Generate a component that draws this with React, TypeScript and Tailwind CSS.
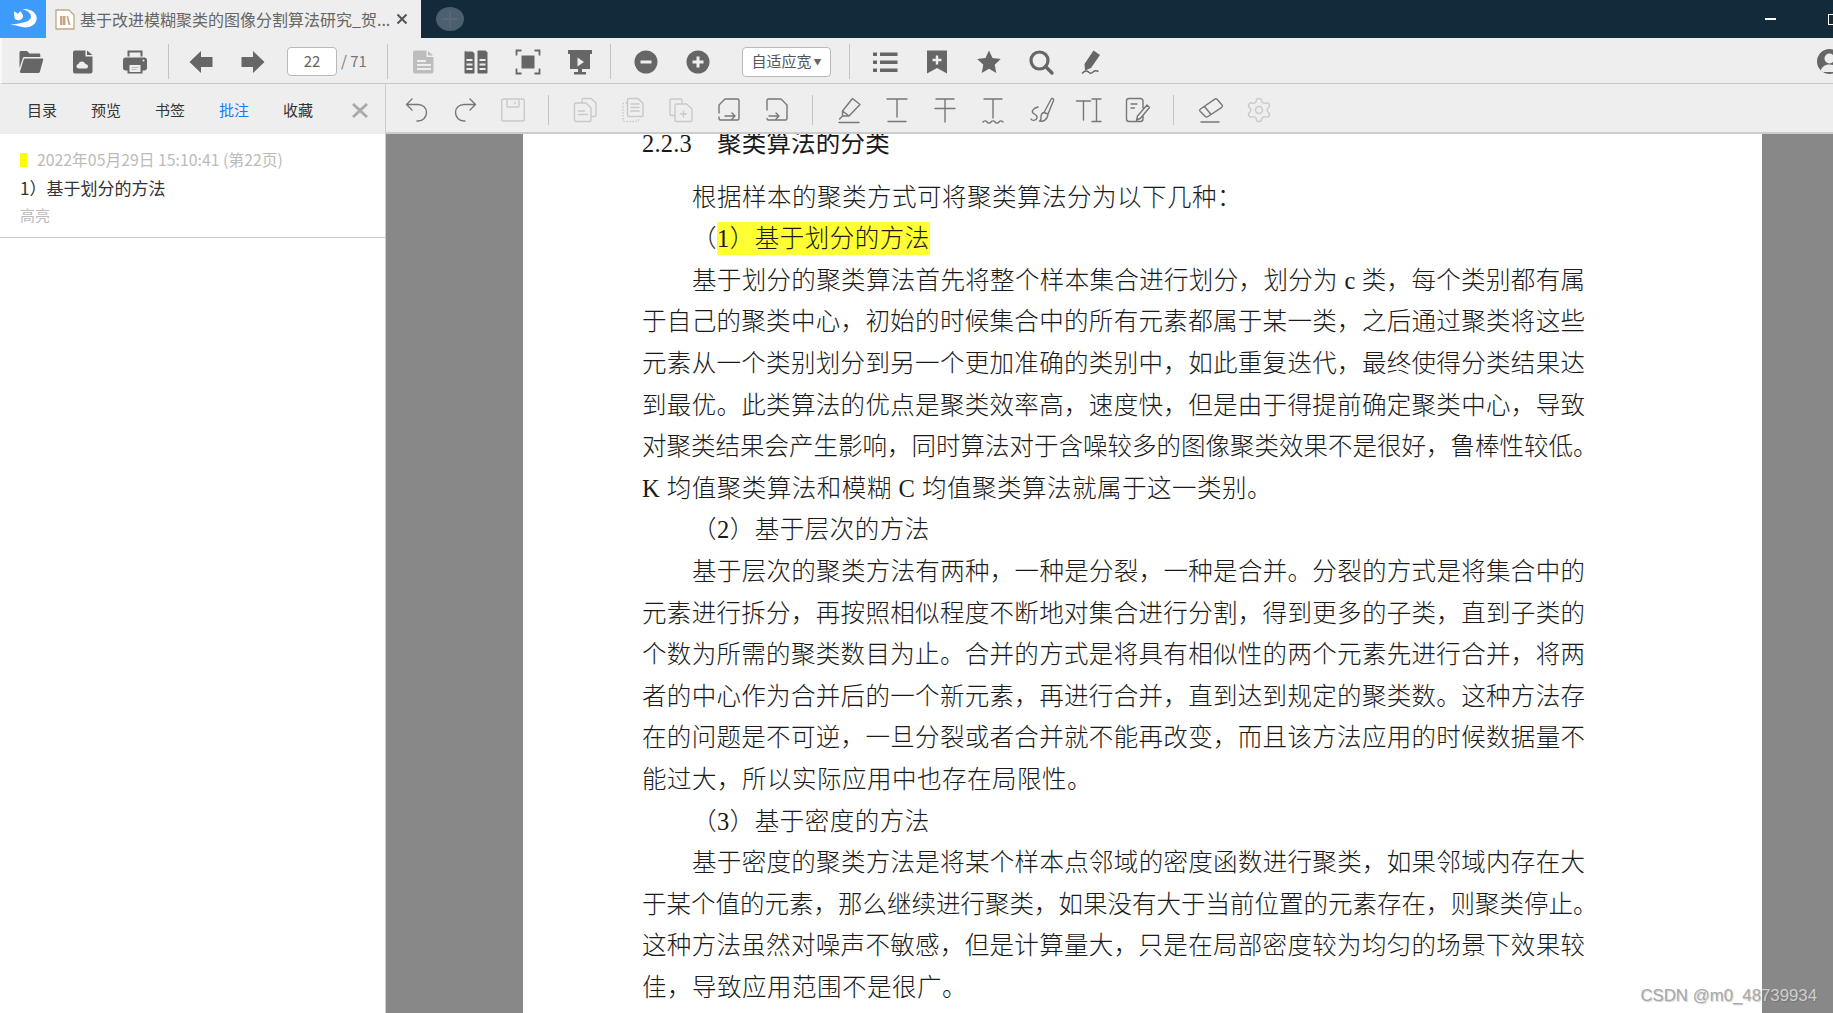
import type { ReactNode } from "react"
import { Settings } from "lucide-react"

const UI_FONT = "[font-family:'Noto_Sans_CJK_SC',sans-serif]"

// page text, one entry per printed line
const lines: { text: string; indent?: boolean; justify?: boolean }[] = [
  { text: "根据样本的聚类方式可将聚类算法分为以下几种：", indent: true },
  { text: "HIGHLIGHT", indent: true },
  { text: "基于划分的聚类算法首先将整个样本集合进行划分，划分为 c 类，每个类别都有属", indent: true, justify: true },
  { text: "于自己的聚类中心，初始的时候集合中的所有元素都属于某一类，之后通过聚类将这些", justify: true },
  { text: "元素从一个类别划分到另一个更加准确的类别中，如此重复迭代，最终使得分类结果达", justify: true },
  { text: "到最优。此类算法的优点是聚类效率高，速度快，但是由于得提前确定聚类中心，导致", justify: true },
  { text: "对聚类结果会产生影响，同时算法对于含噪较多的图像聚类效果不是很好，鲁棒性较低。", justify: true },
  { text: "K 均值聚类算法和模糊 C 均值聚类算法就属于这一类别。" },
  { text: "（2）基于层次的方法", indent: true },
  { text: "基于层次的聚类方法有两种，一种是分裂，一种是合并。分裂的方式是将集合中的", indent: true, justify: true },
  { text: "元素进行拆分，再按照相似程度不断地对集合进行分割，得到更多的子类，直到子类的", justify: true },
  { text: "个数为所需的聚类数目为止。合并的方式是将具有相似性的两个元素先进行合并，将两", justify: true },
  { text: "者的中心作为合并后的一个新元素，再进行合并，直到达到规定的聚类数。这种方法存", justify: true },
  { text: "在的问题是不可逆，一旦分裂或者合并就不能再改变，而且该方法应用的时候数据量不", justify: true },
  { text: "能过大，所以实际应用中也存在局限性。" },
  { text: "（3）基于密度的方法", indent: true },
  { text: "基于密度的聚类方法是将某个样本点邻域的密度函数进行聚类，如果邻域内存在大", indent: true, justify: true },
  { text: "于某个值的元素，那么继续进行聚类，如果没有大于当前位置的元素存在，则聚类停止。", justify: true },
  { text: "这种方法虽然对噪声不敏感，但是计算量大，只是在局部密度较为均匀的场景下效果较", justify: true },
  { text: "佳，导致应用范围不是很广。" },
]

function Ico({ w = 52, children }: { w?: number; children: ReactNode }) {
  return (
    <div className="flex shrink-0 items-center justify-center" style={{ width: w }}>
      <svg width="28" height="28" viewBox="0 0 28 28">
        {children}
      </svg>
    </div>
  )
}

function Sep({ className }: { className: string }) {
  return <div className={`w-px shrink-0 bg-[#c4c4c4] ${className}`} />
}

function Line2({ d, c = "#777" }: { d: string; c?: string }) {
  return <path d={d} fill="none" stroke={c} strokeWidth="1.4" strokeLinecap="round" strokeLinejoin="round" />
}

const DIS = "#c9c9c9"

function TopToolbar() {
  const f = "#666"
  return (
    <div className="flex h-[46px] items-center overflow-hidden border-b border-[#c8c8c8] border-l-2 border-l-[#f8f8f8] bg-[#eeeeee] pl-[3px] pt-[2px]">
      <Ico>
        <path fill={f} d="M2.500 4.500c0-.8.6-1.500 1.500-1.500h6l2.500 2.500H22c.8 0 1.300.6 1.300 1.300V9H7.500c-.9 0-1.400.4-1.700 1.200L2.500 20Z" />
        <path fill={f} d="M8 10.500h17.200c.7 0 1.200.6 1 1.300L22.800 24c-.2.6-.7 1-1.300 1H4c-.8 0-1.300-.7-1-1.400L6.700 11.400c.2-.6.7-.9 1.300-.9Z" />
      </Ico>
      <Ico>
        <path fill={f} d="M6 2.500h10.500v6h7V23.500c0 1.200-.9 2-2 2H6c-1.100 0-2-.8-2-2v-19c0-1.100.9-2 2-2Z" />
        <path fill={f} d="M18 2.500 23.500 7h-5.500Z" />
        <path fill="#eee" d="M10 20.500c-1.500 0-2.500-1-2.500-2.300 0-1.200.9-2.100 2-2.300.4-1.500 1.700-2.500 3.300-2.500 1.700 0 3.100 1.100 3.500 2.700 1.500 0 2.700 1 2.700 2.300 0 1.200-1 2.100-2.300 2.100Z" />
      </Ico>
      <Ico>
        <path fill={f} d="M6.500 2.500h15v6h-2V4.500h-11v4h-2Z" />
        <path fill={f} d="M4.500 9.500h19c1.400 0 2.500 1.100 2.500 2.500v8c0 1.400-1.100 2.500-2.500 2.500H21.500v3h-15v-3H4.500C3.100 22.500 2 21.400 2 20v-8c0-1.400 1.100-2.500 2.500-2.500Z" />
        <path fill="#eee" d="M8.500 17h11v7h-11Z" />
        <path fill="#bbb" d="M10.500 19h7v1h-7Zm0 2h5v1h-5Z" />
        <circle cx="22.500" cy="12.500" r="1" fill="#eee" />
      </Ico>
      <Sep className="ml-[7px] h-[35px]" />
      <div className="w-[6px] shrink-0" />
      <Ico>
        <path fill={f} d="M2.500 14 14 3v6h11.500v10H14v6Z" />
      </Ico>
      <Ico>
        <path fill={f} d="M25.500 14 14 3v6H2.500v10H14v6Z" />
      </Ico>
      <div className={`ml-[8px] flex h-[29px] w-[50px] shrink-0 items-center justify-center rounded-[4px] border border-[#b9b9b9] bg-white text-[15px] text-[#666] ${UI_FONT}`}>
        22
      </div>
      <span className={`ml-[4px] w-[42px] shrink-0 text-[15px] text-[#777] ${UI_FONT}`}>/ 71</span>
      <Sep className="ml-[4px] h-[35px]" />
      <div className="w-[10px] shrink-0" />
      <Ico>
        <path fill="#bdbdbd" d="M5 2.500h11.500v6.500h7v14.500c0 1.100-.9 2-2 2H5c-1.100 0-2-.9-2-2v-19c0-1.100.9-2 2-2Z" />
        <path fill="#bdbdbd" d="M18 3l5 4.500h-5Z" />
        <path fill="#eee" d="M7 12h9v2H7Zm0 4h14v2H7Zm0 4h14v2H7Z" />
      </Ico>
      <Ico>
        <path fill={f} d="M3.500 3.500h7l2 2v19c0 .6-.4 1-1 1h-8c-.6 0-1-.4-1-1v-20c0-1 .4-2 1-2Z" />
        <path fill={f} d="M16.500 2.500h7l2 2v20c0 .6-.4 1-1 1h-8c-.6 0-1-.4-1-1v-21c0-.6.4-1 1-1Z" />
        <path fill="#eee" d="M4.500 11h6v2h-6Zm0 4.500h6v2h-6Zm0 4.500h6v2h-6Zm13-9h6v2h-6Zm0 4.500h6v2h-6Zm0 4.500h6v2h-6Z" />
      </Ico>
      <Ico>
        <path fill={f} d="M7.500 7.500h13v13h-13Z" />
        <path fill="none" stroke={f} strokeWidth="1.800" d="M2.500 7.500V2.500h5M20.500 2.500h5v5M25.500 20.500v5h-5M7.500 25.500h-5v-5" />
      </Ico>
      <Ico>
        <path fill={f} d="M2 2h24v4h-2v15H16v3h4v2.500H8V24h4v-3H4V6H2Z" />
        <path fill="#eee" d="M11.500 9.500 18 14l-6.500 4.500Z" />
      </Ico>
      <Sep className="ml-[4px] h-[35px]" />
      <div className="w-[9px] shrink-0" />
      <Ico>
        <circle cx="14" cy="14" r="11.500" fill={f} />
        <path fill="#eee" d="M8.500 12.500h11v3h-11Z" />
      </Ico>
      <Ico>
        <circle cx="14" cy="14" r="11.500" fill={f} />
        <path fill="#eee" d="M8.500 12.500h4v-4h3v4h4v3h-4v4h-3v-4h-4Z" />
      </Ico>
      <div className={`ml-[18px] flex h-[30px] w-[89px] shrink-0 items-center justify-center rounded-[4px] border border-[#b9b9b9] bg-white text-[15px] text-[#555] ${UI_FONT}`}>
        自适应宽<span className="ml-[2px] text-[8px] text-[#666]">▼</span>
      </div>
      <Sep className="ml-[18px] h-[35px]" />
      <div className="w-[9px] shrink-0" />
      <Ico>
        <path fill={f} d="M2 4.500h4v3.500H2Zm0 8h4V16H2Zm0 8h4V24H2ZM9 4.500h17.500v3.500H9Zm0 8h17.500V16H9Zm0 8h17.500V24H9Z" />
      </Ico>
      <Ico>
        <path fill={f} d="M4 2.500h20v23l-10-5.500-10 5.500Z" />
        <path fill="#eee" d="M12.800 7.500h2.400v3.300h3.300v2.400h-3.300v3.300h-2.400v-3.300H9.500v-2.400h3.300Z" />
      </Ico>
      <Ico>
        <path fill={f} d="m14 2.500 3.500 7.600 8.300 1-6.100 5.600 1.600 8.200L14 20.800 6.700 24.900l1.600-8.200L2.200 11.100l8.300-1Z" />
      </Ico>
      <Ico>
        <circle cx="12.500" cy="12.500" r="8.500" fill="none" stroke={f} strokeWidth="3.200" />
        <path d="m18.500 18.500 6.500 6.500" stroke={f} strokeWidth="3.400" strokeLinecap="round" />
      </Ico>
      <Ico>
        <path fill={f} d="m14.500 2.500 6.500 4.500-9 13-6 2.500-.5-6.500Z" />
        <path fill="none" stroke={f} strokeWidth="1.500" d="M3 25.500c3-3 5-3 6.500-1.500s3 1.500 4.500 0 3.500-1.500 5.500-.5" />
      </Ico>
      <div className="ml-auto mr-[-9px] flex h-[25px] w-[25px] shrink-0 items-center justify-center overflow-hidden rounded-full bg-[#666]">
        <svg width="25" height="25" viewBox="0 0 25 25">
          <circle cx="12.500" cy="9.500" r="5" fill="#eee" />
          <path fill="#eee" d="M3.500 23c.6-5 4.300-7.500 9-7.500s8.400 2.500 9 7.500Z" />
        </svg>
      </div>
    </div>
  )
}

function AnnotToolbar() {
  return (
    <div className="flex h-[50px] flex-1 items-center border-b-2 border-[#cccccc] bg-[#eeeeee] pl-[7px] pt-[4px]">
      <Ico w={48}>
        <Line2 d="M9 3 3.500 8.500 9 14M4 8.500h11c5 0 8.500 3.500 8.500 8s-3.500 8.500-8.500 8.500h-1" />
      </Ico>
      <Ico w={48}>
        <Line2 d="M19 3l5.500 5.500L19 14M24 8.500H13c-5 0-8.500 3.500-8.500 8s3.500 8.500 8.500 8.500h1" />
      </Ico>
      <Ico w={48}>
        <Line2 c={DIS} d="M4.500 3h19c1 0 1.800.8 1.800 1.800v18.400c0 1-.8 1.800-1.800 1.800h-19c-1 0-1.800-.8-1.800-1.800V4.800c0-1 .8-1.800 1.800-1.800ZM8 3v7c0 .6.400 1 1 1h10c.6 0 1-.4 1-1V3M16 6v1.500" />
      </Ico>
      <Sep className="ml-[11px] h-[30px]" />
      <div className="w-[12px] shrink-0" />
      <Ico w={48}>
        <Line2 c={DIS} d="M11 7V4c0-1 .8-1.500 1.500-1.500H20L25 7v12c0 1-.7 1.500-1.500 1.500H20M5 7h10l5 5v12c0 1-.7 1.500-1.500 1.500H5c-1 0-1.500-.7-1.500-1.500V8.500C3.500 7.700 4 7 5 7ZM7.500 15h6M7.500 18.500h9" />
      </Ico>
      <Ico w={48}>
        <Line2 c={DIS} d="M10 2.500h9l5 5V19c0 .9-.7 1.500-1.500 1.500H10c-.9 0-1.500-.7-1.500-1.500V4c0-.9.7-1.500 1.500-1.500ZM12 8h8M12 11.500h8M12 15h8" />
        <path fill="none" stroke={DIS} strokeWidth="1.400" strokeDasharray="1.500 1.500" d="M8 7H5.500C4.500 7 4 7.600 4 8.500V24c0 1 .6 1.500 1.500 1.500H18c.9 0 1.500-.6 1.500-1.500v-2" />
      </Ico>
      <Ico w={48}>
        <Line2 c={DIS} d="M15 8V4.500C15 3.600 14.400 3 13.500 3H4.500C3.600 3 3 3.600 3 4.500V18c0 .9.6 1.500 1.500 1.500H8M9.500 8h10l5.500 5v11c0 .9-.6 1.500-1.500 1.500h-14c-.9 0-1.500-.6-1.500-1.500V9.500C8 8.600 8.600 8 9.500 8ZM16.500 15v6M13.500 18h6" />
      </Ico>
      <Ico w={48}>
        <Line2 d="M4 17V9l6-6h12.500C23.400 3 24 3.600 24 4.500v18c0 .9-.6 1.500-1.500 1.500h-17C4.600 24 4 23.400 4 22.500V21M10 20h10M17 17l3 3-3 3" />
      </Ico>
      <Ico w={48}>
        <Line2 d="M4 14V4.500C4 3.600 4.600 3 5.500 3H18l6 6v13.500c0 .9-.6 1.500-1.500 1.500H5.500C4.600 24 4 23.400 4 22.500M6 20h10M13 17l3 3-3 3" />
      </Ico>
      <Sep className="ml-[11px] h-[30px]" />
      <div className="w-[12px] shrink-0" />
      <Ico w={48}>
        <Line2 d="M17.500 2.500 25 8.500 14 20H7.500v-5ZM7.500 15 14 20M7.500 20l-3 3M4 26.500h20" />
      </Ico>
      <Ico w={48}>
        <Line2 d="M4 3h20M14 3v18M5 25.500h18" />
      </Ico>
      <Ico w={48}>
        <Line2 d="M5 3h18M14 3v23M4 12.500h20" />
      </Ico>
      <Ico w={48}>
        <Line2 d="M5 3h18M14 3v19M4 26c1.500-1.500 3-1.500 4 0s3 1.500 4 0 3-1.500 4 0 3 1.500 4 0 2.500-1.500 4 0" />
      </Ico>
      <Ico w={48}>
        <Line2 d="M24.500 2.500C26 2 27 3 26.500 4.500L21 18l-4-1.500ZM17 16.500c-2.500.5-3 2.500-3 4.500 0 3-1 4-1.500 4 3.500 1 8-1 8.500-7M11 11c-4 1-7 4-5 6s5 2 4 5-5 3-6 1" />
      </Ico>
      <Ico w={48}>
        <Line2 d="M1.500 5h14M8.500 5v19M17 3h9M17 25.500h9M21.500 3v22.500" />
      </Ico>
      <Ico w={48}>
        <Line2 d="M20 12V5c0-1.300-1-2.500-2.500-2.500H6C4.700 2.500 3.500 3.700 3.500 5v18c0 1.300 1.200 2.500 2.500 2.500h11.500c1.300 0 2.500-1 2.500-2.500v-3M8 8h6M8 12h3.500M24 9 14.500 20l-1 4 3.800-1.500L26.500 11.500Z" />
      </Ico>
      <Sep className="ml-[12px] h-[30px]" />
      <div className="w-[13px] shrink-0" />
      <Ico w={48}>
        <Line2 d="M17.500 3.300Q19 2.300 20 3.300L25 9Q26 10.300 24.800 11.300L11 20.500Q9.500 21.500 8.300 20.500L3.300 15.500Q2 14 3.500 13ZM7.500 10.500 14 18.500M4 26h18" />
      </Ico>
      <div className="flex w-[48px] shrink-0 items-center justify-center">
        <Settings size={28} strokeWidth={1.200} className="text-[#c9c9c9]" />
      </div>
    </div>
  )
}

function Tabs() {
  const tabs = ["目录", "预览", "书签", "批注", "收藏"]
  return (
    <div className={`flex h-[50px] w-[386px] shrink-0 items-center border-r border-[#cccccc] bg-[#eeeeee] pl-[10px] pt-[3px] text-[15px] ${UI_FONT}`}>
      {tabs.map((t) => (
        <div key={t} className={`w-[64px] shrink-0 text-center ${t === "批注" ? "text-[#1a7cf2]" : "text-[#333]"}`}>
          {t}
        </div>
      ))}
      <svg className="ml-[22px]" width="16" height="15" viewBox="0 0 16 15">
        <path d="m1 1 14 13M15 1 1 14" stroke="#aaa" strokeWidth="2.800" />
      </svg>
    </div>
  )
}

function Sidebar() {
  return (
    <div className={`w-[386px] shrink-0 border-r border-[#cccccc] bg-white ${UI_FONT}`}>
      <div className="border-b border-[#cccccc] pb-[10px] pl-[20px] pt-[14px]">
        <div className="flex h-[24px] items-center">
          <div className="h-[14px] w-[7px] bg-[#ffff00]" />
          <span className="ml-[10px] text-[15.800px] text-[#bbb]">2022年05月29日 15:10:41 (第22页)</span>
        </div>
        <div className="mt-[2px] h-[28px] text-[17px] leading-[28px] text-[#333]">1）基于划分的方法</div>
        <div className="mt-[1px] h-[24px] text-[15px] leading-[24px] text-[#bbb]">高亮</div>
      </div>
    </div>
  )
}

function PdfPage() {
  return (
    <div className="h-full flex-1 overflow-hidden bg-[#888888] pl-[137px]">
      <div className="h-full w-[1239px] overflow-hidden bg-white pl-[119px]">
        <div className="mt-[-11px] w-[943px] whitespace-nowrap text-[24.500px] font-light leading-[41.600px] text-[#1a1a1a] [font-family:'Liberation_Serif','Noto_Sans_CJK_SC',serif]">
          <div className="mb-[12px] font-normal tracking-[0.200px]">
            2.2.3<span className="ml-[25px]">聚类算法的分类</span>
          </div>
          {lines.map((l, i) => (
            <div key={i} className={`${l.indent ? "pl-[50px]" : ""} ${l.justify ? "text-justify [text-align-last:justify]" : "tracking-[0.500px]"}`}>
              {l.text === "HIGHLIGHT" ? (
                <>
                  （<span className="bg-[#ffff33] py-[3px]">1）基于划分的方法</span>
                </>
              ) : (
                l.text
              )}
            </div>
          ))}
        </div>
      </div>
    </div>
  )
}

export default function App() {
  return (
    <div className="relative flex h-[1013px] w-[1833px] flex-col overflow-hidden bg-white">
      {/* title bar */}
      <div className="flex h-[38px] shrink-0 items-center overflow-hidden bg-[#132a3b]">
        <div className="h-full w-[46px] shrink-0 bg-[#3d9bfb]">
          <svg width="46" height="38" viewBox="0 0 46 38">
            <path fill="#fff" d="M22 9C32 8 38 14 36.500 20 35 26 28 28.500 22 27 18 26 14 25 10.500 24.500 14 24 18 24 21 23 27 22 31 20 31 16.500 31 13 27 10.500 22 9Z" />
            <path fill="#fff" d="M14 11.500c2 .5 3 1.500 4 2.500.5-1.200 1.200-2 2.500-2.800.8 1.500 2 2.500 2.500 4 .5 2-1 4.500-3.500 5-1.500.3-3-.2-4.500-1.200-.5-1-1-3-1-7.500Z" />
          </svg>
        </div>
        <div className={`flex h-full w-[375px] shrink-0 items-center bg-[#eeeeee] pl-[9px] text-[16px] text-[#666] ${UI_FONT}`}>
          <svg width="20" height="21" viewBox="0 0 20 21" className="shrink-0">
            <path fill="#fff" stroke="#c4a57f" strokeWidth="1.300" d="M1 1h13l5 5v14H1Z" />
            <path fill="#c4a57f" d="M5 7h2.500v9H5Zm3 0h2.500v9H8Zm3.500 0 1.500-.3L15.500 16h-2Z" />
          </svg>
          <span className="ml-[5px] w-[310px] shrink-0 whitespace-nowrap">基于改进模糊聚类的图像分割算法研究_贺...</span>
          <svg width="12" height="12" viewBox="0 0 12 12" className="ml-[6px] shrink-0">
            <path d="m1.500 1.500 9 9M10.500 1.500l-9 9" stroke="#555" strokeWidth="2" />
          </svg>
        </div>
        <div className="ml-[15px] flex h-[24px] w-[28px] shrink-0 items-center justify-center rounded-[50%] bg-[#4a6072]">
          <svg width="16" height="16" viewBox="0 0 16 16">
            <path d="M8 0v16M0 8h16" stroke="#5b6670" strokeWidth="2" />
          </svg>
        </div>
        <div className="ml-auto h-[1.500px] w-[11px] shrink-0 bg-white" />
        <div className="ml-[52px] mr-[-10px] h-[11px] w-[15px] shrink-0 border border-white" />
      </div>
      <TopToolbar />
      <div className="flex shrink-0">
        <Tabs />
        <AnnotToolbar />
      </div>
      <div className="flex min-h-0 flex-1">
        <Sidebar />
        <PdfPage />
      </div>
      {/* CSDN watermark */}
      <div className="absolute bottom-[5px] right-[16px] text-[16.800px] text-[#a8a8a8] [font-family:'Liberation_Sans',sans-serif] [text-shadow:1px_1px_1px_rgba(60,60,60,0.25)]">
        CSDN @m0_48<span className="text-[#cfcfcf]">739934</span>
      </div>
    </div>
  )
}
